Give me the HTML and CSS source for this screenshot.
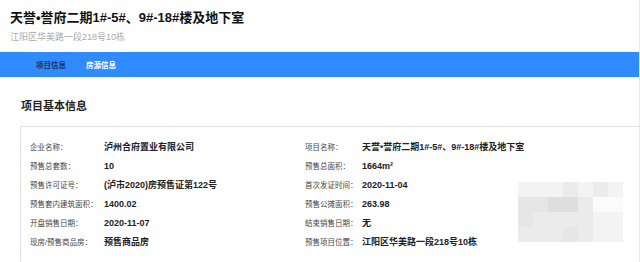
FILE: index.html
```html
<!DOCTYPE html>
<html>
  <head>
    <title>天誉•誉府二期</title>
    <link rel="stylesheet" href="styles.css">
  </head>
  <body>
    <div class="page">
      <div class="head">
        <h1 class="title">天誉•誉府二期1#-5#、9#-18#楼及地下室</h1>
        <div class="addr">江阳区华美路一段218号10栋</div>
      </div>
      <div class="tabs">
        <span class="tab active">项目信息</span>
        <span class="tab">房源信息</span>
      </div>
      <h2 class="sec-title">项目基本信息</h2>
      <div class="card">
        <table class="info">
          <tr>
            <td class="lbl l1">企业名称：</td>
            <td class="val v1">泸州合府置业有限公司</td>
            <td class="lbl l2">项目名称：</td>
            <td class="val">天誉•誉府二期1#-5#、9#-18#楼及地下室</td>
          </tr>
          <tr>
            <td class="lbl">预售总套数：</td>
            <td class="val">10</td>
            <td class="lbl">预售总面积：</td>
            <td class="val">1664m²</td>
          </tr>
          <tr>
            <td class="lbl">预售许可证号：</td>
            <td class="val">(泸市2020)房预售证第122号</td>
            <td class="lbl">首次发证时间：</td>
            <td class="val">2020-11-04</td>
          </tr>
          <tr>
            <td class="lbl">预售套内建筑面积：</td>
            <td class="val">1400.02</td>
            <td class="lbl">预售公摊面积：</td>
            <td class="val">263.98</td>
          </tr>
          <tr>
            <td class="lbl">开盘销售日期：</td>
            <td class="val">2020-11-07</td>
            <td class="lbl">结束销售日期：</td>
            <td class="val">无</td>
          </tr>
          <tr>
            <td class="lbl">现房/预售商品房：</td>
            <td class="val">预售商品房</td>
            <td class="lbl">预售项目位置：</td>
            <td class="val">江阳区华美路一段218号10栋</td>
          </tr>
        </table>
        <!-- blurred picture -->
        <div class="blur">
          <i class="c1"></i><i class="c1"></i><i class="c1"></i><i class="c2"></i><i class="c1"></i><i class="c2"></i><i class="c1"></i>
          <i class="c3"></i><i class="c3"></i><i class="c4"></i><i class="c4"></i><i class="c2"></i><i class="c0"></i><i class="c0"></i>
          <i class="c3"></i><i class="c2"></i><i class="c2"></i><i class="c2"></i><i class="c2"></i><i class="c1"></i><i class="c1"></i>
          <i class="c2"></i><i class="c2"></i><i class="c2"></i><i class="c3"></i><i class="c2"></i><i class="c1"></i><i class="c1"></i>
        </div>
      </div>
    </div>
  </body>
</html>
```

FILE: styles.css
```css
body {
  margin: 0;
  background-color: white;
  font-family: "Liberation Sans", "Noto Sans CJK SC", sans-serif;
  color: #222;
}
.page {
  width: 639px;
  height: 262px;
  border-right: 1px solid #e8e8e8;
}
.head {
  padding: 8px 10px 0 10px;
  height: 44px;
}
.title {
  margin: 0;
  font-size: 13px;
  line-height: 20px;
  font-weight: bold;
  color: #111;
}
.addr {
  font-size: 9px;
  line-height: 12px;
  margin-top: 3px;
  color: #aaa;
}
.tabs {
  background-color: #2f8bff;
  height: 25px;
  display: flex;
  align-items: center;
  padding-left: 36px;
  gap: 20px;
}
.tab {
  font-size: 7.5px;
  font-weight: bold;
  color: white;
}
.tab.active {
  color: #1c3464;
}
.sec-title {
  margin: 0;
  padding: 23px 0 0 21px;
  height: 26px;
  font-size: 11px;
  line-height: 13px;
  font-weight: bold;
  color: #222;
}
.card {
  position: relative;
  margin-left: 20px;
  width: 610px;
  height: 131px;
  border: 1px solid #e2e2e2;
  padding: 10px 0 0 9px;
}
.info {
  border-collapse: collapse;
}
.info td {
  padding: 0;
  height: 19px;
  white-space: nowrap;
}
.lbl {
  font-size: 7.5px;
  color: #444;
}
.val {
  font-size: 9px;
  font-weight: bold;
  color: #222;
}
.l1 {
  width: 74px;
}
.v1 {
  width: 201px;
}
.l2 {
  width: 57px;
}
.blur {
  position: absolute;
  left: 497px;
  top: 55px;
  display: grid;
  grid-template-columns: repeat(7, 15px);
  grid-auto-rows: 15px;
}
.blur i {
  display: block;
}
.c0 {
  background-color: #fbfbfb;
}
.c1 {
  background-color: #f3f3f3;
}
.c2 {
  background-color: #ebebeb;
}
.c3 {
  background-color: #e6e6e6;
}
.c4 {
  background-color: #dedede;
}
```
